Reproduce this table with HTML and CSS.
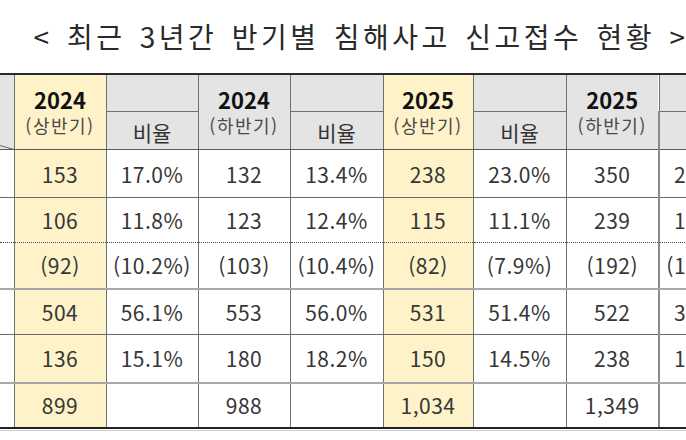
FILE: index.html
```html
<!DOCTYPE html>
<html lang="ko">
<head>
<meta charset="utf-8">
<link rel="stylesheet" href="styles.css">
</head>
<body>
<div class="page">
  <h1 class="title">&lt; 최근 3년간 반기별 침해사고 신고접수 현황 &gt;</h1>
  <table class="stats">
    <colgroup>
      <col class="c-label">
      <col class="c-92"><col class="c-92"><col class="c-92"><col class="c-93">
      <col class="c-90"><col class="c-93"><col class="c-93"><col class="c-92">
    </colgroup>
    <thead>
      <tr class="h-top">
        <th rowspan="2" class="corner"><svg class="diag" width="14" height="74" viewBox="0 0 14 74"><line x1="-2" y1="70" x2="14" y2="74.5" stroke="#666" stroke-width="1"/></svg></th>
        <th rowspan="2" class="period hl"><span class="yr">2024</span><span class="half">(상반기)</span></th>
        <th class="blank"></th>
        <th rowspan="2" class="period"><span class="yr">2024</span><span class="half">(하반기)</span></th>
        <th class="blank"></th>
        <th rowspan="2" class="period hl"><span class="yr">2025</span><span class="half">(상반기)</span></th>
        <th class="blank"></th>
        <th rowspan="2" class="period"><span class="yr">2025</span><span class="half">(하반기)</span></th>
        <th class="blank"></th>
      </tr>
      <tr class="h-sub">
        <th class="ratio-h">비율</th>
        <th class="ratio-h">비율</th>
        <th class="ratio-h">비율</th>
        <th class="ratio-h last">비율</th>
      </tr>
    </thead>
    <tbody>
      <tr class="r1">
        <td class="lbl"></td><td class="hl">153</td><td>17.0%</td><td>132</td><td>13.4%</td><td class="hl">238</td><td>23.0%</td><td>350</td><td class="last">25.9%</td>
      </tr>
      <tr class="r2 dotted">
        <td class="lbl"></td><td class="hl">106</td><td>11.8%</td><td>123</td><td>12.4%</td><td class="hl">115</td><td>11.1%</td><td>239</td><td class="last">17.7%</td>
      </tr>
      <tr class="r3 grayline">
        <td class="lbl"></td><td class="hl">(92)</td><td>(10.2%)</td><td>(103)</td><td>(10.4%)</td><td class="hl">(82)</td><td>(7.9%)</td><td>(192)</td><td class="last">(14.2%)</td>
      </tr>
      <tr class="r4">
        <td class="lbl"></td><td class="hl">504</td><td>56.1%</td><td>553</td><td>56.0%</td><td class="hl">531</td><td>51.4%</td><td>522</td><td class="last">38.7%</td>
      </tr>
      <tr class="r5 grayline">
        <td class="lbl"></td><td class="hl">136</td><td>15.1%</td><td>180</td><td>18.2%</td><td class="hl">150</td><td>14.5%</td><td>238</td><td class="last">17.6%</td>
      </tr>
      <tr class="r6 final">
        <td class="lbl"></td><td class="hl">899</td><td></td><td>988</td><td></td><td class="hl">1,034</td><td></td><td>1,349</td><td class="last"></td>
      </tr>
    </tbody>
  </table>
  <div class="under-rule"></div>
</div>
</body>
</html>
```

FILE: styles.css
```css
html, body {
  margin: 0;
  padding: 0;
  background: #ffffff;
  overflow: hidden;
}

.page {
  width: 760px;
}

.title {
  margin: 0;
  width: 722px;
  height: 73px;
  padding-bottom: 2px;
  box-sizing: border-box;
  display: flex;
  align-items: center;
  justify-content: center;
  white-space: nowrap;
  font-family: "Noto Sans CJK KR", "Noto Sans", sans-serif;
  font-weight: 400;
  font-size: 28px;
  letter-spacing: 3.5px;
  word-spacing: 3px;
  color: #2a2a2a;
}

.stats {
  border-collapse: collapse;
  table-layout: fixed;
  width: 751px;
  border-top: 2px solid #2a2a2a;
  font-family: "Noto Sans CJK KR", "Noto Sans", sans-serif;
  color: #333333;
}

.c-label { width: 14px; }
.c-92 { width: 92px; }
.c-93 { width: 93px; }
.c-90 { width: 90px; }

.stats th,
.stats td {
  padding: 0;
  text-align: center;
  vertical-align: middle;
  overflow: hidden;
  white-space: nowrap;
}

.stats thead th {
  background: #e4e4e4;
  font-weight: 400;
}

.h-top { height: 37px; }
.h-sub { height: 37px; }

.corner {
  border-right: 1px solid #707070;
  border-bottom: 1px solid #5a5a5a;
  vertical-align: top;
}

.diag { display: block; }

.stats thead th.period {
  border-right: 1px solid #707070;
  border-bottom: 1px solid #5a5a5a;
}

.stats thead th.hl,
.stats td.hl {
  background: #fdf2c8;
}

.yr {
  display: block;
  font-weight: 700;
  font-size: 22px;
  line-height: 27px;
  color: #111111;
  margin-top: 0;
}

.half {
  display: block;
  font-size: 18px;
  line-height: 25px;
  letter-spacing: 1.5px;
  color: #4a4a4a;
}

.blank {
  border-right: 1px solid #707070;
}

.stats thead th.blank:last-child {
  border-right: none;
}

.stats thead th.ratio-h {
  border-top: 1px solid #707070;
  border-left: 1px solid #707070;
  border-right: 1px solid #707070;
  border-bottom: 1px solid #5a5a5a;
  font-size: 21px;
  color: #333333;
  padding-top: 2px;
}

.stats thead th.ratio-h.last {
  border-left: 2px solid #8a8a8a;
}

.stats td {
  font-size: 21px;
  letter-spacing: 0.5px;
  border-right: 1px solid #707070;
  border-bottom: 1px solid #6a6a6a;
  color: #363636;
}

.stats td.last {
  border-left: 2px solid #8a8a8a;
}

.stats td.lbl {
  background: #ffffff;
}

.r1 { height: 48px; }
.r2 { height: 45px; }
.r3 { height: 46px; }
.r4 { height: 46px; }
.r5 { height: 48px; }
.r6 { height: 45px; }

.dotted td {
  border-bottom: 1px dotted #444444;
}

.grayline td {
  border-bottom: 2px solid #a8a8a8;
}

.final td {
  border-bottom: 2px solid #222222;
}

.under-rule {
  width: 751px;
  height: 1px;
  margin-top: 1px;
  background: #d0d0d0;
}
```
